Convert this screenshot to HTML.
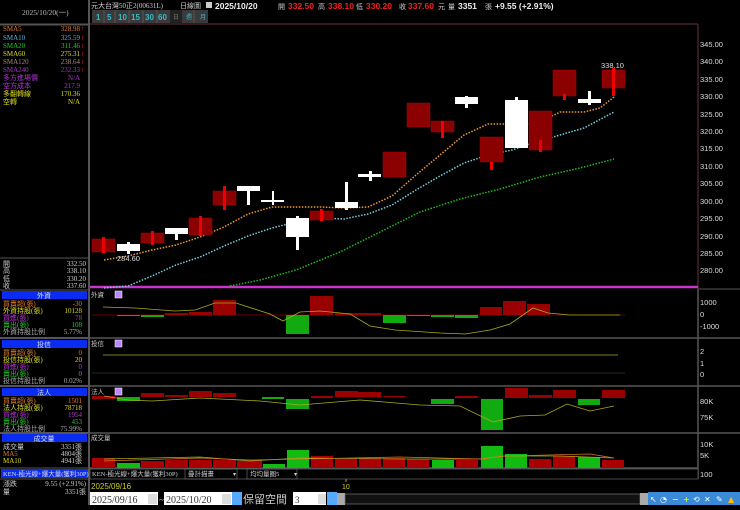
<!DOCTYPE html><html><head><meta charset="utf-8"><style>
body{margin:0;background:#000;width:740px;height:505px;overflow:hidden}
.s{font-family:"Liberation Sans","Noto Sans CJK TC",sans-serif}
</style></head><body>
<svg width="740" height="505" viewBox="0 0 740 505" xmlns="http://www.w3.org/2000/svg" font-size="8" font-family="Liberation Serif, Noto Sans CJK TC, serif">
<rect width="740" height="505" fill="#000"/>
<rect x="0" y="0" width="89" height="505" fill="#000"/>
<line x1="89" y1="0" x2="89" y2="505" stroke="#555" stroke-width="2"/>
<line x1="0" y1="24" x2="89" y2="24" stroke="#555"/>
<line x1="0" y1="25" x2="89" y2="25" stroke="#555"/>
<text x="22" y="15" fill="#bbb" font-size="7.5">2025/10/20(一)</text>
<g font-size="7">
<text x="3" y="31" fill="#e07a2a">SMA5</text><text x="80" y="31" fill="#e07a2a" text-anchor="end">328.98</text>
<text x="3" y="40" fill="#5fb0e0">SMA10</text><text x="80" y="40" fill="#5fb0e0" text-anchor="end">325.59</text>
<text x="3" y="48" fill="#2c2">SMA20</text><text x="80" y="48" fill="#2c2" text-anchor="end">311.46</text>
<text x="3" y="56" fill="#dd2">SMA60</text><text x="80" y="56" fill="#dd2" text-anchor="end">275.31</text>
<text x="3" y="64" fill="#a87">SMA120</text><text x="80" y="64" fill="#a87" text-anchor="end">238.64</text>
<text x="3" y="72" fill="#a3c">SMA240</text><text x="80" y="72" fill="#a3c" text-anchor="end">232.33</text>
<text x="3" y="80" fill="#a3c">多方進場價</text><text x="80" y="80" fill="#a3c" text-anchor="end">N/A</text>
<text x="3" y="88" fill="#b3d">空方成本</text><text x="80" y="88" fill="#b3d" text-anchor="end">217.9</text>
<text x="3" y="96" fill="#dd2">多翻轉線</text><text x="80" y="96" fill="#dd2" text-anchor="end">170.36</text>
<text x="3" y="104" fill="#dd2">空轉</text><text x="80" y="104" fill="#dd2" text-anchor="end">N/A</text>
</g>
<g fill="#e22" font-size="7"><text x="81" y="31">↑</text><text x="81" y="40">↑</text><text x="81" y="48">↑</text><text x="81" y="56">↑</text><text x="81" y="64">↑</text><text x="81" y="72">↑</text></g>
<line x1="0" y1="258" x2="89" y2="258" stroke="#555"/>
<g font-size="7" fill="#ccc"><text x="3" y="266">開</text><text x="86" y="266" text-anchor="end">332.50</text>
<text x="3" y="273">高</text><text x="86" y="273" text-anchor="end">338.10</text>
<text x="3" y="281">低</text><text x="86" y="281" text-anchor="end">330.20</text>
<text x="3" y="288">收</text><text x="86" y="288" text-anchor="end">337.60</text></g>
<line x1="0" y1="290" x2="89" y2="290" stroke="#555"/>
<rect x="2" y="291" width="85" height="8" fill="#0a2cf0"/><text x="44" y="298" fill="#ddd" text-anchor="middle" font-size="7">外資</text>
<g font-size="7"><text x="3" y="306" fill="#e07a2a">買賣超(張)</text><text x="82" y="306" fill="#e07a2a" text-anchor="end">-30</text>
<text x="3" y="313" fill="#dd2">外資持股(張)</text><text x="82" y="313" fill="#dd2" text-anchor="end">10128</text>
<text x="3" y="320" fill="#b3d">買進(張)</text><text x="82" y="320" fill="#b3d" text-anchor="end">78</text>
<text x="3" y="327" fill="#2c2">賣出(張)</text><text x="82" y="327" fill="#2c2" text-anchor="end">108</text>
<text x="3" y="334" fill="#aaa">外資持股比例</text><text x="82" y="334" fill="#aaa" text-anchor="end">5.77%</text></g>
<line x1="0" y1="338" x2="89" y2="338" stroke="#555" stroke-width="2"/>
<rect x="2" y="340" width="85" height="8" fill="#0a2cf0"/><text x="44" y="347" fill="#ddd" text-anchor="middle" font-size="7">投信</text>
<g font-size="7"><text x="3" y="355" fill="#e07a2a">買賣超(張)</text><text x="82" y="355" fill="#e07a2a" text-anchor="end">0</text>
<text x="3" y="362" fill="#dd2">投信持股(張)</text><text x="82" y="362" fill="#dd2" text-anchor="end">20</text>
<text x="3" y="369" fill="#b3d">買進(張)</text><text x="82" y="369" fill="#b3d" text-anchor="end">0</text>
<text x="3" y="376" fill="#2c2">賣出(張)</text><text x="82" y="376" fill="#2c2" text-anchor="end">0</text>
<text x="3" y="383" fill="#aaa">投信持股比例</text><text x="82" y="383" fill="#aaa" text-anchor="end">0.02%</text></g>
<line x1="0" y1="386" x2="89" y2="386" stroke="#555" stroke-width="2"/>
<rect x="2" y="388" width="85" height="8" fill="#0a2cf0"/><text x="44" y="395" fill="#ddd" text-anchor="middle" font-size="7">法人</text>
<g font-size="7"><text x="3" y="403" fill="#e07a2a">買賣超(張)</text><text x="82" y="403" fill="#e07a2a" text-anchor="end">1501</text>
<text x="3" y="410" fill="#dd2">法人持股(張)</text><text x="82" y="410" fill="#dd2" text-anchor="end">78718</text>
<text x="3" y="417" fill="#b3d">買進(張)</text><text x="82" y="417" fill="#b3d" text-anchor="end">1954</text>
<text x="3" y="424" fill="#2c2">賣出(張)</text><text x="82" y="424" fill="#2c2" text-anchor="end">453</text>
<text x="3" y="431" fill="#aaa">法人持股比例</text><text x="82" y="431" fill="#aaa" text-anchor="end">75.99%</text></g>
<line x1="0" y1="433" x2="89" y2="433" stroke="#555" stroke-width="2"/>
<rect x="2" y="434" width="85" height="8" fill="#0a2cf0"/><text x="44" y="441" fill="#ddd" text-anchor="middle" font-size="7">成交量</text>
<g font-size="7"><text x="3" y="449" fill="#ccc">成交量</text><text x="82" y="449" fill="#ccc" text-anchor="end">3351張</text>
<text x="3" y="456" fill="#e07a2a">MA5</text><text x="82" y="456" fill="#ccc" text-anchor="end">4804張</text>
<text x="3" y="463" fill="#dd2">MA10</text><text x="82" y="463" fill="#ccc" text-anchor="end">4941張</text></g>
<line x1="0" y1="468" x2="89" y2="468" stroke="#555"/>
<rect x="1" y="469" width="87" height="9" fill="#0a2cf0"/><text x="3" y="476" fill="#ddd" font-size="6.5">KEN-極光線+爆大量(獲利30P)</text>
<line x1="0" y1="479" x2="89" y2="479" stroke="#555"/>
<g font-size="7" fill="#ccc"><text x="3" y="486">漲跌</text><text x="86" y="486" text-anchor="end">9.55 (+2.91%)</text>
<text x="3" y="494">量</text><text x="86" y="494" text-anchor="end">3351張</text></g>

<text x="91" y="8" fill="#ccc" font-size="7">元大台灣50正2(00631L)</text>
<text x="180" y="8" fill="#ccc" font-size="7">日線圖</text>
<rect x="206" y="2" width="6" height="6" fill="#ccc"/>
<g class="s" font-weight="bold" font-size="8.5">
<text x="215" y="9" fill="#eee">2025/10/20</text>
<text x="278" y="9" fill="#ccc" font-size="7" font-weight="normal">開</text><text x="288" y="9" fill="#e22">332.50</text>
<text x="318" y="9" fill="#ccc" font-size="7" font-weight="normal">高</text><text x="328" y="9" fill="#e22">338.10</text>
<text x="356" y="9" fill="#ccc" font-size="7" font-weight="normal">低</text><text x="366" y="9" fill="#e22">330.20</text>
<text x="399" y="9" fill="#ccc" font-size="7" font-weight="normal">收</text><text x="408" y="9" fill="#e22">337.60</text>
<text x="438" y="9" fill="#ccc" font-size="7" font-weight="normal">元</text>
<text x="448" y="9" fill="#ccc" font-size="7" font-weight="normal">量</text><text x="458" y="9" fill="#eee">3351</text>
<text x="485" y="9" fill="#ccc" font-size="7" font-weight="normal">張</text>
<text x="495" y="9" fill="#eee">+9.55 (+2.91%)</text></g>
<rect x="92" y="10" width="116" height="13" fill="#3a3a3a"/>
<g class="s" font-weight="bold" font-size="8" fill="#3bc">
<text x="96" y="20">1</text><text x="107" y="20">5</text><text x="118" y="20">10</text><text x="131" y="20">15</text><text x="145" y="20">30</text><text x="158" y="20">60</text></g>
<rect x="170" y="10" width="12" height="13" fill="#222"/><text x="173" y="19" fill="#777" font-size="6">日</text>
<text x="186" y="19" fill="#3bc" font-size="6">週</text><text x="200" y="19" fill="#3bc" font-size="6">月</text>
<g stroke="#555"><line x1="104" y1="10" x2="104" y2="23"/><line x1="115" y1="10" x2="115" y2="23"/><line x1="129" y1="10" x2="129" y2="23"/><line x1="143" y1="10" x2="143" y2="23"/><line x1="157" y1="10" x2="157" y2="23"/><line x1="194" y1="10" x2="194" y2="23"/></g>
<line x1="90" y1="24" x2="698" y2="24" stroke="#6a3040"/>
<line x1="698" y1="24" x2="698" y2="290" stroke="#6a3040"/>
<line x1="90" y1="287" x2="698" y2="287" stroke="#c3c" stroke-width="2.5"/>
<line x1="698" y1="289" x2="740" y2="289" stroke="#555"/>
<g fill="#ddd" class="s" font-size="7.5">
<text x="700" y="47">345.00</text><text x="700" y="64">340.00</text><text x="700" y="82">335.00</text><text x="700" y="99">330.00</text><text x="700" y="117">325.00</text><text x="700" y="134">320.00</text><text x="700" y="151">315.00</text><text x="700" y="169">310.00</text><text x="700" y="186">305.00</text><text x="700" y="204">300.00</text><text x="700" y="221">295.00</text><text x="700" y="239">290.00</text><text x="700" y="256">285.00</text><text x="700" y="273">280.00</text></g>
<polyline fill="none" stroke="#2b2" stroke-width="1.5" stroke-dasharray="1.5 1.5" points="230,286 260,280 296,270 340,252 380,232 420,212 460,199 500,189 540,177 580,168 614,159"/>
<polyline fill="none" stroke="#7cd" stroke-width="1.5" stroke-dasharray="1.5 1.5" points="104,288 128,286 152,276 176,265 200,257 224,246 248,236 272,228 296,222 320,218 344,219 368,214 392,205 416,190 440,176 464,163 488,155 512,150 536,142 560,135 584,128 614,112"/>
<polyline fill="none" stroke="#e93" stroke-width="1.5" stroke-dasharray="1.5 1.5" points="104,260 128,256 152,250 176,245 200,237 224,227 248,214 272,207 296,207 320,207 344,208 368,207 392,196 416,175 440,155 464,135 488,124 512,124 536,124 560,112 584,112 600,108 614,97"/>
<g fill="#8b0000" stroke="#a00" stroke-width="0.5">
<rect x="92" y="239" width="23" height="13"/><rect x="141" y="233" width="23" height="10"/><rect x="189" y="218" width="23" height="17"/>
<rect x="213" y="191" width="23" height="14"/><rect x="310" y="211" width="23" height="9"/><rect x="383" y="152" width="23" height="25"/>
<rect x="407" y="103" width="23" height="24"/><rect x="431" y="121" width="23" height="11"/><rect x="480" y="137" width="23" height="25"/>
<rect x="529" y="111" width="23" height="39"/><rect x="553" y="70" width="23" height="26"/><rect x="602" y="70" width="23" height="18"/></g>
<g fill="#e00">
<rect x="102" y="237" width="3" height="16"/><rect x="151" y="231" width="3" height="14"/><rect x="199" y="216" width="3" height="20"/>
<rect x="223" y="186" width="3" height="24"/><rect x="320" y="209" width="3" height="12"/><rect x="441" y="121" width="3" height="17"/>
<rect x="490" y="162" width="3" height="8"/><rect x="539" y="140" width="3" height="12"/><rect x="563" y="94" width="3" height="6"/><rect x="612" y="68" width="3" height="28"/></g>
<g fill="#fff">
<rect x="117" y="244" width="23" height="7"/><rect x="127" y="242" width="3" height="12"/>
<rect x="165" y="228" width="23" height="6"/><rect x="175" y="228" width="3" height="12"/>
<rect x="237" y="186" width="23" height="5"/><rect x="247" y="186" width="3" height="19"/>
<rect x="261" y="200" width="23" height="2"/><rect x="272" y="191" width="2" height="14"/>
<rect x="286" y="218" width="23" height="19"/><rect x="296" y="216" width="3" height="34"/>
<rect x="335" y="202" width="23" height="6"/><rect x="345" y="182" width="3" height="28"/>
<rect x="358" y="174" width="23" height="3"/><rect x="369" y="171" width="3" height="10"/>
<rect x="455" y="97" width="23" height="7"/><rect x="465" y="96" width="3" height="12"/>
<rect x="505" y="100" width="23" height="48"/><rect x="515" y="97" width="3" height="4"/>
<rect x="578" y="99" width="23" height="4"/><rect x="588" y="91" width="3" height="14"/></g>
<text x="117" y="261" fill="#ddd" font-size="7.5" class="s">284.60</text>
<text x="601" y="68" fill="#ddd" font-size="7.5" class="s">338.10</text>

<g stroke="#555" stroke-width="1.5"><line x1="90" y1="338" x2="740" y2="338"/><line x1="90" y1="386" x2="740" y2="386"/><line x1="90" y1="433" x2="740" y2="433"/><line x1="90" y1="468" x2="698" y2="468"/>
<line x1="698" y1="289" x2="698" y2="479"/></g>
<g fill="#ddd" class="s" font-size="7.5">
<text x="700" y="305">1000</text><text x="700" y="317">0</text><text x="700" y="329">-1000</text>
<text x="700" y="354">2</text><text x="700" y="366">1</text><text x="700" y="377">0</text>
<text x="700" y="404">80K</text><text x="700" y="420">75K</text>
<text x="700" y="447">10K</text><text x="700" y="458">5K</text><text x="700" y="477">100</text></g>
<g fill="#ccc" font-size="6.5"><text x="91" y="297">外資</text><text x="91" y="346">投信</text><text x="91" y="394">法人</text><text x="91" y="440">成交量</text></g>
<g fill="#b8f" stroke="#fff" stroke-width="0.5"><rect x="115" y="291" width="7" height="7"/><rect x="115" y="340" width="7" height="7"/><rect x="115" y="388" width="7" height="7"/></g>
<line x1="92" y1="315" x2="625" y2="315" stroke="#800" stroke-width="0.7"/>
<g fill="#900"><rect x="213" y="300" width="23" height="15"/><rect x="310" y="296" width="23" height="19"/><rect x="480" y="307" width="22" height="8"/><rect x="503" y="301" width="23" height="14"/><rect x="527" y="304" width="23" height="11"/><rect x="165" y="313" width="23" height="2"/><rect x="189" y="312" width="23" height="3"/><rect x="335" y="313" width="23" height="2"/><rect x="358" y="313" width="23" height="2"/></g>
<g fill="#1a1"><rect x="286" y="315" width="23" height="19"/><rect x="383" y="315" width="23" height="8"/><rect x="455" y="315" width="23" height="3"/><rect x="431" y="315" width="23" height="2"/><rect x="407" y="315" width="23" height="1"/><rect x="117" y="315" width="23" height="1"/><rect x="141" y="315" width="23" height="2"/></g>
<polyline fill="none" stroke="#aa2" stroke-width="0.8" points="103,307 135,308 175,311 195,310 215,303 236,303 270,314 283,321 300,312 320,311 350,314 370,326 395,330 440,333 465,334 490,330 510,324 533,308 548,313 570,315 620,315"/>
<line x1="103" y1="355" x2="618" y2="355" stroke="#aa2" stroke-width="0.8"/>
<line x1="92" y1="373" x2="625" y2="373" stroke="#333" stroke-width="0.7"/>
<g fill="#900"><rect x="92" y="396" width="23" height="3"/><rect x="141" y="393" width="23" height="4"/><rect x="165" y="395" width="23" height="2"/><rect x="189" y="391" width="23" height="6"/><rect x="213" y="393" width="23" height="4"/><rect x="311" y="396" width="22" height="2"/><rect x="335" y="391" width="23" height="6"/><rect x="358" y="392" width="23" height="5"/><rect x="383" y="396" width="23" height="1"/><rect x="455" y="396" width="23" height="2"/><rect x="505" y="388" width="23" height="10"/><rect x="529" y="395" width="23" height="3"/><rect x="553" y="390" width="23" height="8"/><rect x="602" y="390" width="23" height="8"/></g>
<g fill="#1a1"><rect x="117" y="397" width="23" height="4"/><rect x="286" y="399" width="23" height="10"/><rect x="431" y="399" width="23" height="5"/><rect x="481" y="399" width="22" height="31"/><rect x="578" y="399" width="22" height="6"/><rect x="262" y="397" width="22" height="2"/></g>
<polyline fill="none" stroke="#aa2" stroke-width="0.8" points="104,396 128,400 152,401 200,398 260,401 300,405 360,400 420,405 460,406 493,422 520,416 545,415 567,404 590,411 614,406"/>
<g fill="#a00"><rect x="92" y="458" width="23" height="10"/><rect x="141" y="461" width="23" height="7"/><rect x="165" y="460" width="23" height="8"/><rect x="189" y="460" width="23" height="8"/><rect x="213" y="460" width="23" height="8"/><rect x="237" y="461" width="23" height="7"/><rect x="250" y="460" width="12" height="8"/><rect x="311" y="456" width="22" height="12"/><rect x="335" y="459" width="22" height="9"/><rect x="359" y="458" width="22" height="10"/><rect x="383" y="458" width="22" height="10"/><rect x="407" y="459" width="22" height="9"/><rect x="456" y="460" width="22" height="8"/><rect x="529" y="459" width="22" height="9"/><rect x="553" y="456" width="22" height="12"/><rect x="602" y="460" width="22" height="8"/></g>
<g fill="#1b1"><rect x="117" y="463" width="23" height="5"/><rect x="263" y="464" width="22" height="4"/><rect x="287" y="450" width="22" height="18"/><rect x="432" y="460" width="22" height="8"/><rect x="481" y="446" width="22" height="22"/><rect x="505" y="454" width="22" height="14"/><rect x="578" y="457" width="22" height="11"/></g>
<polyline fill="none" stroke="#aa2" stroke-width="0.7" points="104,459 200,457 250,461 300,458 400,459 480,459 505,456 560,456 614,458"/>
<polyline fill="none" stroke="#d72" stroke-width="0.7" points="104,461 200,458 250,460 300,459 400,457 480,459 505,456 590,454 614,458"/>
<rect x="90" y="469" width="608" height="10" fill="#000" stroke="#666" stroke-width="0.7"/>
<text x="92" y="476" fill="#ccc" font-size="6.5">KEN-極光線+爆大量(獲利30P)</text>
<rect x="185" y="469" width="52" height="10" fill="none" stroke="#666" stroke-width="0.7"/><text x="188" y="476" fill="#ccc" font-size="6.5">疊計描畫</text><text x="233" y="476" fill="#ccc" font-size="6">▾</text>
<rect x="247" y="469" width="50" height="10" fill="none" stroke="#666" stroke-width="0.7"/><text x="250" y="476" fill="#ccc" font-size="6.5">均均量圈5</text><text x="294" y="476" fill="#ccc" font-size="6">▾</text>
<text x="91" y="489" fill="#cc2" font-size="8" class="s">2025/09/16</text>
<line x1="346" y1="479" x2="346" y2="482" stroke="#aa2"/><text x="342" y="489" fill="#cc2" font-size="7" class="s">10</text>
<rect x="90" y="492" width="68" height="13" fill="#fff"/><text x="92" y="503" fill="#333" font-size="10">2025/09/16</text><rect x="148" y="494" width="9" height="10" fill="#ddd"/>
<text x="159" y="503" fill="#ccc" font-size="9">~</text>
<rect x="164" y="492" width="68" height="13" fill="#fff"/><text x="166" y="503" fill="#333" font-size="10">2025/10/20</text><rect x="222" y="494" width="9" height="10" fill="#ddd"/>
<rect x="232" y="492" width="10" height="13" fill="#5af"/>
<text x="243" y="503" fill="#ccc" font-size="11">保留空間</text>
<rect x="293" y="492" width="33" height="13" fill="#fff"/><text x="295" y="503" fill="#333" font-size="9">3</text><rect x="318" y="494" width="8" height="10" fill="#ddd"/>
<rect x="327" y="492" width="10" height="13" fill="#5af"/>
<rect x="337" y="493" width="8" height="12" fill="#aaa"/>
<rect x="345" y="494" width="295" height="10" fill="#111" stroke="#777" stroke-width="0.7"/>
<rect x="640" y="493" width="8" height="12" fill="#aaa"/>
<rect x="648" y="492" width="92" height="13" fill="#3a8ad8"/>
<g fill="#fff" font-size="8" font-family="DejaVu Sans"><text x="650" y="502">↖</text><text x="660" y="502">◔</text><text x="672" y="502">−</text><text x="683" y="502" fill="#ff0">+</text><text x="693" y="502">⟲</text><text x="704" y="502">✕</text><text x="716" y="502">✎</text><text x="728" y="502" fill="#fb0">▲</text></g>
</svg>
</body></html>
